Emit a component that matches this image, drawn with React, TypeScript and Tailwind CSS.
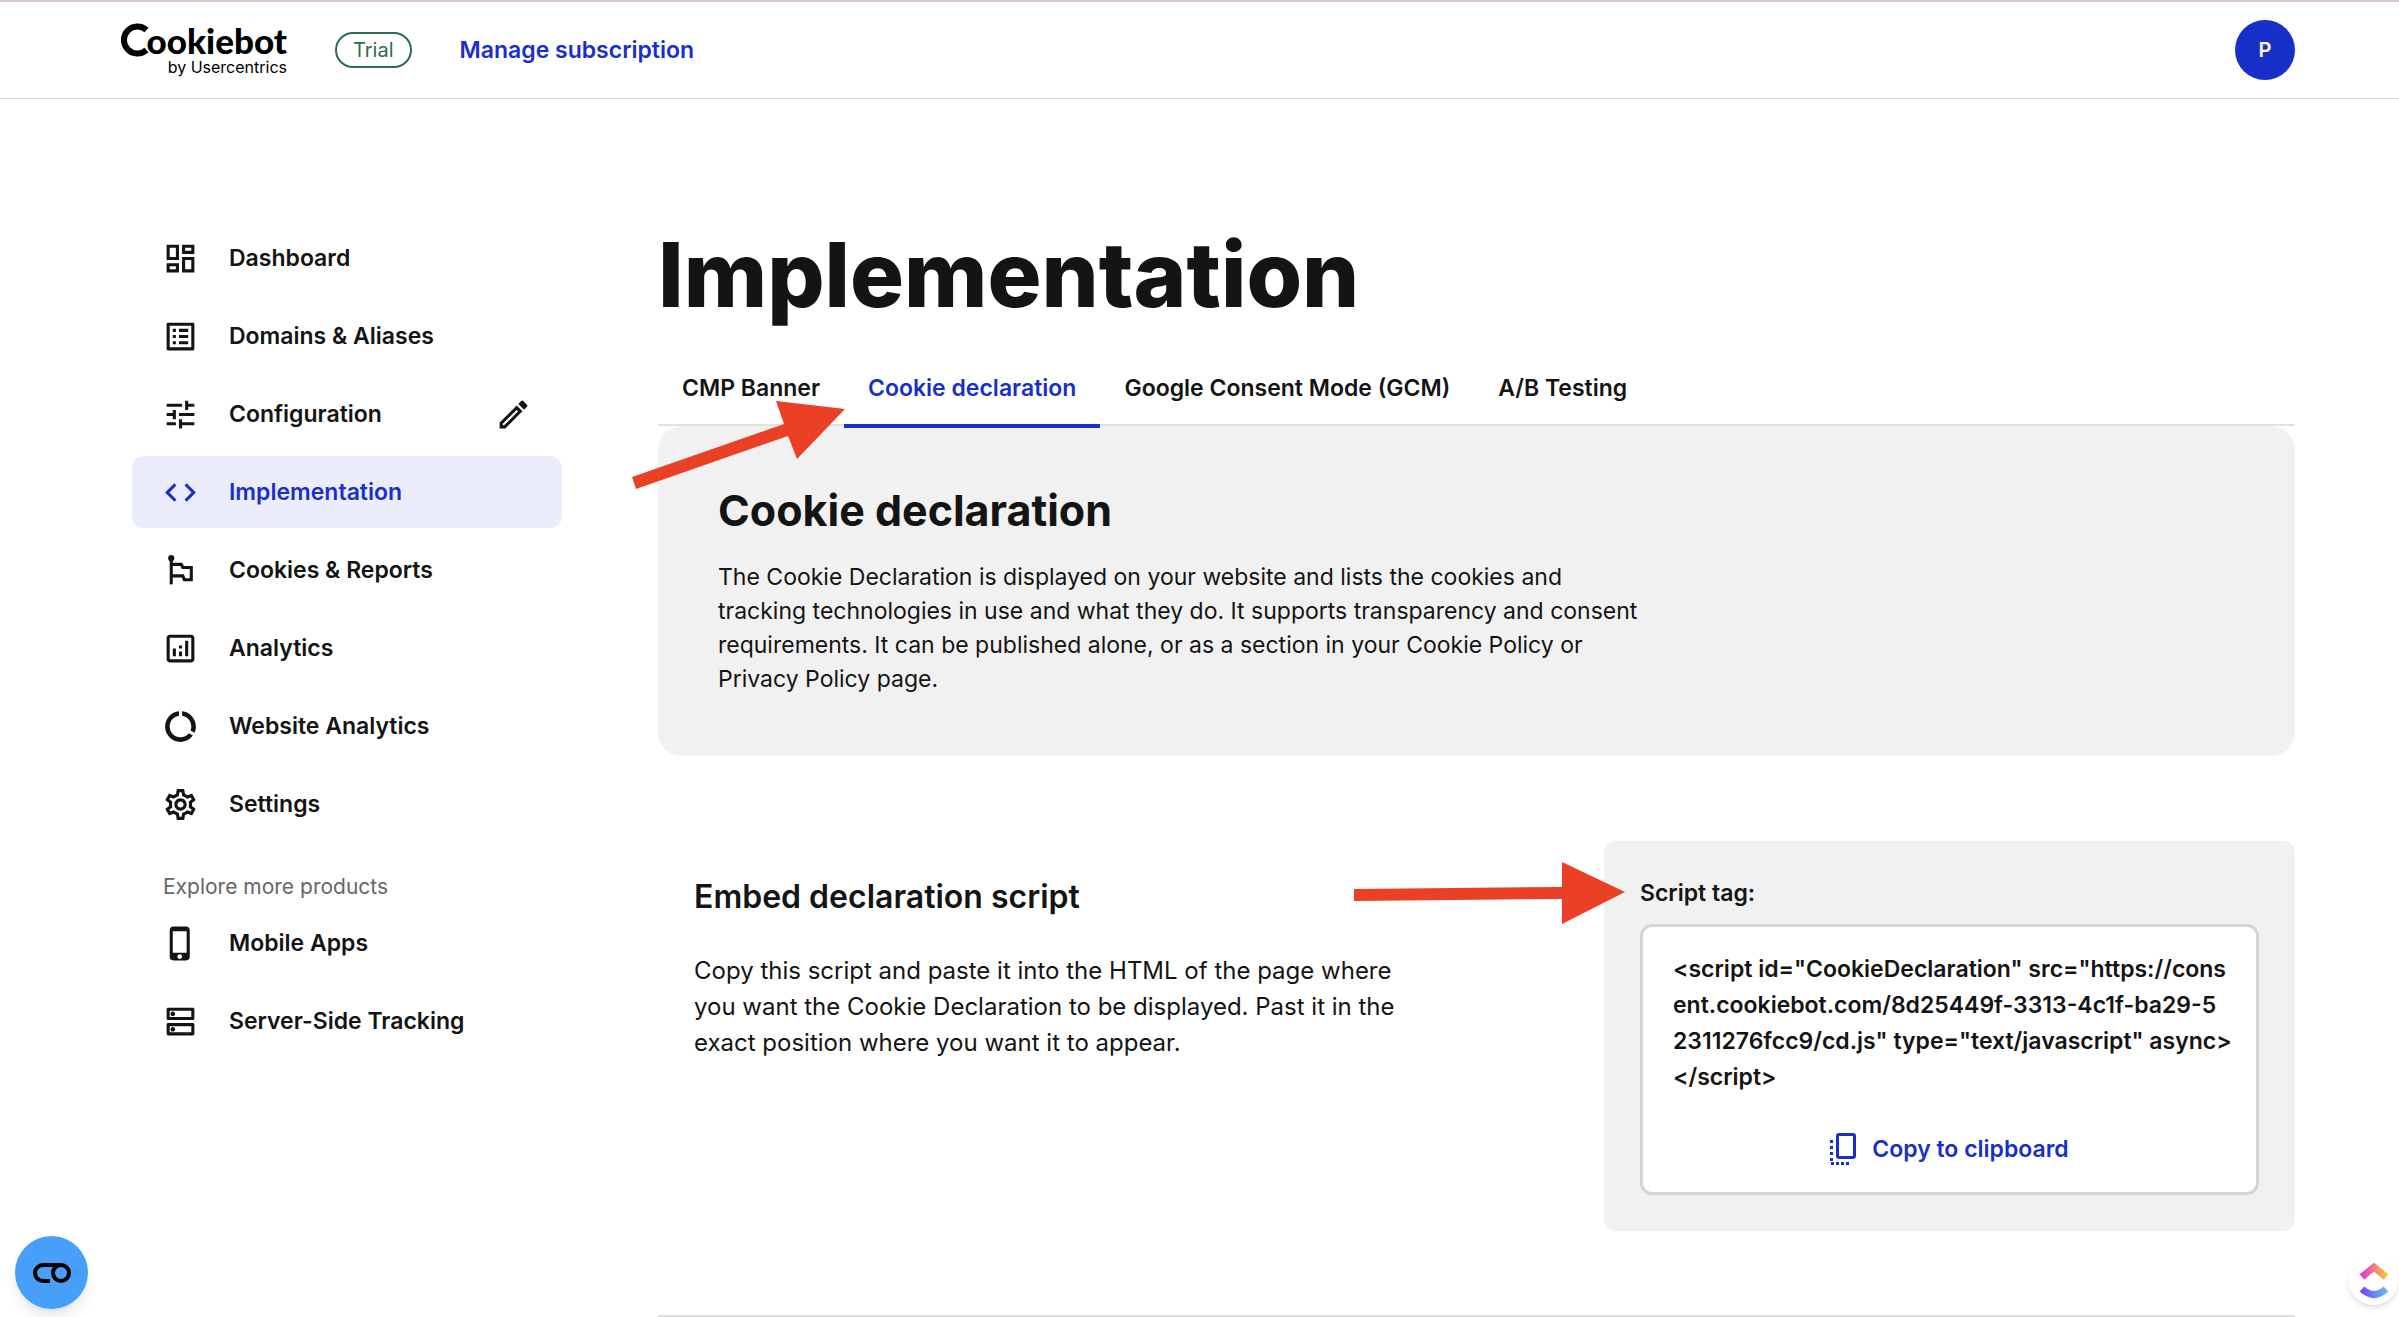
import type { ReactNode } from "react";
import {
  MdCode,
  MdDataUsage,
  MdOutlineAnalytics,
  MdOutlineDashboard,
  MdOutlineDns,
  MdOutlineListAlt,
  MdOutlineSettings,
  MdPhoneIphone,
  MdTune,
} from "react-icons/md";
import { clsx } from "clsx";

const SCRIPT_TAG = [
  '<script id="CookieDeclaration" src="https://cons',
  "ent.cookiebot.com/8d25449f-3313-4c1f-ba29-5",
  '2311276fcc9/cd.js" type="text/javascript" async>',
  "</script>",
].join("\n");

const TABS = ["CMP Banner", "Cookie declaration", "Google Consent Mode (GCM)", "A/B Testing"];

type NavItem = { label: string; icon: ReactNode; active?: boolean; editable?: boolean };

const NAV: NavItem[] = [
  { label: "Dashboard", icon: <MdOutlineDashboard size={37} /> },
  { label: "Domains & Aliases", icon: <MdOutlineListAlt size={37} /> },
  { label: "Configuration", icon: <MdTune size={37} />, editable: true },
  { label: "Implementation", icon: <MdCode size={37} />, active: true },
  { label: "Cookies & Reports", icon: <FlagIcon /> },
  { label: "Analytics", icon: <MdOutlineAnalytics size={37} /> },
  { label: "Website Analytics", icon: <MdDataUsage size={37} /> },
  { label: "Settings", icon: <MdOutlineSettings size={37} /> },
];

const PRODUCTS: NavItem[] = [
  { label: "Mobile Apps", icon: <MdPhoneIphone size={37} /> },
  { label: "Server-Side Tracking", icon: <MdOutlineDns size={37} /> },
];

function FlagIcon() {
  return (
    <svg viewBox="0 0 24 24" className="size-[37px]" fill="none" stroke="currentColor" strokeWidth="2">
      <path d="M6 4v17" />
      <circle cx="6" cy="4" r="2" fill="currentColor" stroke="none" />
      <path d="M6 8h6.5l1 2H19v8h-4.500l-1-2.500H6" />
    </svg>
  );
}

function PencilIcon() {
  return (
    <svg viewBox="0 0 24 24" className="size-[37px]" fill="currentColor">
      <path fillRule="evenodd" d="M3 17.250V21h3.750L17.810 9.940l-3.750-3.750zM5 19v-.920l9.060-9.060.92.92L5.920 19z" />
      <path d="M18.370 3.290a1 1 0 0 0-1.410 0l-1.830 1.830 3.750 3.750 1.830-1.830a1 1 0 0 0 0-1.410z" />
    </svg>
  );
}

function CopyIcon() {
  return (
    <svg viewBox="0 0 26 32" className="h-8 w-[26px]" fill="none" stroke="currentColor">
      <rect x="7.500" y="1.500" width="17" height="23" rx="1.500" strokeWidth="3" />
      <path d="M1.500 7v21" strokeWidth="3" strokeDasharray="3 3" />
      <path d="M1 30.500h18" strokeWidth="3" strokeDasharray="3 2" />
    </svg>
  );
}

function Logo() {
  return (
    <a href="#" aria-label="Cookiebot by Usercentrics" className="flex w-[166px] flex-col items-end text-black">
      <span className="flex items-center justify-end">
        <svg viewBox="0 0 28 34" className="-mr-0.5 h-[34px] w-7 shrink-0" fill="none" stroke="currentColor" strokeWidth="6">
          <path d="M25.500 7A13.500 13.500 0 1 0 25.500 27" />
        </svg>
        <span className="font-[Lato,sans-serif] text-[35px] leading-[34px] font-black">ookiebot</span>
      </span>
      <span className="text-base leading-5">by Usercentrics</span>
    </a>
  );
}

function NavRow({ item }: { item: NavItem }) {
  return (
    <li
      className={clsx(
        "flex items-center rounded-xl px-[30px]",
        item.active ? "bg-[#ebedfd] text-[#192fc9]" : "text-[#141414]"
      )}
    >
      <a href="#" className="flex h-[72px] flex-1 items-center gap-[30px] text-[23px] font-semibold">
        {item.icon}
        {item.label}
      </a>
      {item.editable && (
        <button aria-label={`Edit ${item.label}`}>
          <PencilIcon />
        </button>
      )}
    </li>
  );
}

export default function App() {
  return (
    <div className="relative min-h-screen overflow-hidden bg-white font-['Inter',sans-serif] text-[#141414]">
      <header className="flex h-[99px] items-center border-t-2 border-b border-t-[#dccaca] border-b-[#dadada] pr-[104px] pl-[121px]">
        <Logo />
        <span className="ml-12 rounded-full border-2 border-[#2e6b4a] px-4 text-xl leading-8 text-[#2e6b4a]">Trial</span>
        <a href="#" className="ml-12 text-[23px] font-semibold text-[#192fc9]">Manage subscription</a>
        <button className="ml-auto size-[60px] rounded-full bg-[#192fc9] text-xl font-semibold text-white">P</button>
      </header>

      <div className="flex pr-[104px] pl-[132px]">
        <nav className="mt-[123px] w-[430px] shrink-0">
          <ul className="flex flex-col gap-1.5">
            {NAV.map((item) => <NavRow key={item.label} item={item} />)}
          </ul>
          <p className="mt-[31px] mb-1 pl-[31px] text-[21px] leading-8 text-[#666]">Explore more products</p>
          <ul className="flex flex-col gap-1.5">
            {PRODUCTS.map((item) => <NavRow key={item.label} item={item} />)}
          </ul>
        </nav>

        <main className="mt-[121px] ml-24 min-w-0 flex-1">
          <h1 className="text-[90px] leading-[110px] font-extrabold">Implementation</h1>

          <div role="tablist" className="mt-6 flex border-b-2 border-[#e2e2e2]">
            {TABS.map((tab, i) => (
              <button
                key={tab}
                role="tab"
                aria-selected={i === 1}
                className={clsx(
                  "-mb-1 border-b-4 px-6 pt-[18px] pb-5 text-[23px] leading-8 font-semibold",
                  i === 1 ? "z-10 border-[#192fc9] text-[#192fc9]" : "border-transparent"
                )}
              >
                {tab}
              </button>
            ))}
          </div>

          <section className="rounded-3xl bg-[#f1f1f1] px-[60px] pt-[58px] pb-[60px]">
            <h2 className="text-[43px] leading-[52px] font-bold">Cookie declaration</h2>
            <p className="mt-6 max-w-[920px] text-[23px] leading-[34px]">
              The Cookie Declaration is displayed on your website and lists the cookies and tracking technologies in
              use and what they do. It supports transparency and consent requirements. It can be published alone, or as
              a section in your Cookie Policy or Privacy Policy page.
            </p>
          </section>

          <section className="mt-[85px] flex justify-between border-b-2 border-[#dedede] pb-[84px]">
            <div className="mt-9 ml-9 max-w-[720px]">
              <h3 className="text-[32px] leading-[40px] font-semibold">Embed declaration script</h3>
              <p className="mt-9 text-[24px] leading-[36px]">
                Copy this script and paste it into the HTML of the page where you want the Cookie Declaration to be
                displayed. Past it in the exact position where you want it to appear.
              </p>
            </div>

            <div className="w-[691px] rounded-xl bg-[#f1f1f1] p-9">
              <h4 className="text-[23px] leading-8 font-semibold">Script tag:</h4>
              <div className="mt-[15px] rounded-xl border-3 border-[#d5d5d5] bg-white px-[30px] pt-6 pb-[27px]">
                <code className="block font-['Inter',sans-serif] text-[23px] leading-[36px] font-semibold whitespace-pre">
                  {SCRIPT_TAG}
                </code>
                <button className="mx-auto mt-[38px] flex items-center gap-4 text-[23px] leading-8 font-semibold text-[#192fc9]">
                  <CopyIcon />
                  Copy to clipboard
                </button>
              </div>
            </div>
          </section>
        </main>
      </div>

      {/* Callout arrows */}
      <svg className="absolute top-[400px] left-[632px] z-20 h-[90px] w-[214px]" viewBox="632 400 214 90" fill="#ea4025">
        <path d="M632 477L784 424L776 401L845 409L797 459L788 436L636 489Z" />
      </svg>
      <svg className="absolute top-[860px] left-[1354px] z-20 h-[66px] w-[272px]" viewBox="1354 860 272 66" fill="#ea4025">
        <path d="M1354 889L1562 887V862L1625 892L1562 924V899L1354 901Z" />
      </svg>

      {/* Floating widgets */}
      <button aria-label="Cookie settings" className="absolute bottom-2 left-[15px] flex size-[73px] items-center justify-center rounded-full bg-[#479ffa] shadow-lg">
        <svg viewBox="0 0 38 20" className="h-5 w-[38px]" fill="none" stroke="#000" strokeWidth="4">
          <path d="M17 18h-7a8 8 0 0 1 0-16h18" />
          <circle cx="28" cy="10" r="8" />
        </svg>
      </button>
      <button aria-label="ClickUp" className="absolute right-0 bottom-3 flex size-[51px] items-center justify-center rounded-full bg-white shadow-md">
        <svg viewBox="0 0 30 38" className="h-[38px] w-[30px]" fill="none" strokeWidth="7">
          <defs>
            <linearGradient id="cu-top" x1="0" x2="1">
              <stop stopColor="#e935d2" />
              <stop offset="1" stopColor="#fbc23c" />
            </linearGradient>
            <linearGradient id="cu-bottom" x1="0" x2="1">
              <stop stopColor="#7048f5" />
              <stop offset="1" stopColor="#66b8fa" />
            </linearGradient>
          </defs>
          <path d="M3 16L15 6l12 10" stroke="url(#cu-top)" />
          <path d="M3 28q12 11 24 0" stroke="url(#cu-bottom)" />
        </svg>
      </button>
    </div>
  );
}
